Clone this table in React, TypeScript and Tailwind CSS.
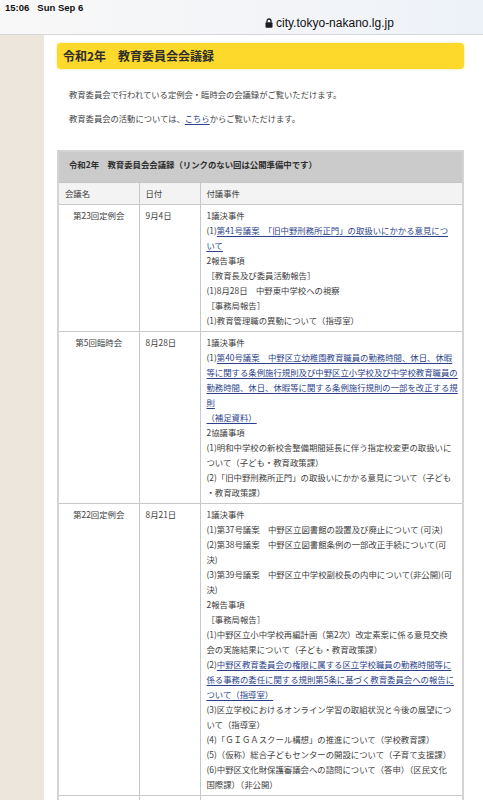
import { Fragment } from "react";

type Seg = { t: string; link?: boolean };
type Line = Seg[];

interface Meeting {
  name: string;
  date: string;
  lines: Line[];
}

const p = (t: string): Line => [{ t }];
const l = (t: string): Line => [{ t, link: true }];
const pl = (a: string, b: string): Line => [{ t: a }, { t: b, link: true }];

const meetings: Meeting[] = [
  {
    name: "第23回定例会",
    date: "9月4日",
    lines: [
      p("1議決事件"),
      pl("(1)", "第41号議案　「旧中野刑務所正門」の取扱いにかかる意見につ"),
      l("いて"),
      p("2報告事項"),
      p("［教育長及び委員活動報告］"),
      p("(1)8月28日　中野東中学校への視察"),
      p("［事務局報告］"),
      p("(1)教育管理職の異動について（指導室）"),
    ],
  },
  {
    name: "第5回臨時会",
    date: "8月28日",
    lines: [
      p("1議決事件"),
      pl("(1)", "第40号議案　中野区立幼稚園教育職員の勤務時間、休日、休暇"),
      l("等に関する条例施行規則及び中野区立小学校及び中学校教育職員の"),
      l("勤務時間、休日、休暇等に関する条例施行規則の一部を改正する規"),
      l("則"),
      l("（補足資料）"),
      p("2協議事項"),
      p("(1)明和中学校の新校舎整備期間延長に伴う指定校変更の取扱いに"),
      p("ついて（子ども・教育政策課）"),
      p("(2)「旧中野刑務所正門」の取扱いにかかる意見について（子ども"),
      p("・教育政策課）"),
    ],
  },
  {
    name: "第22回定例会",
    date: "8月21日",
    lines: [
      p("1議決事件"),
      p("(1)第37号議案　中野区立図書館の設置及び廃止について (可決)"),
      p("(2)第38号議案　中野区立図書館条例の一部改正手続について(可"),
      p("決)"),
      p("(3)第39号議案　中野区立中学校副校長の内申について(非公開)(可"),
      p("決)"),
      p("2報告事項"),
      p("［事務局報告］"),
      p("(1)中野区立小中学校再編計画（第2次）改定素案に係る意見交換"),
      p("会の実施結果について（子ども・教育政策課）"),
      pl("(2)", "中野区教育委員会の権限に属する区立学校職員の勤務時間等に"),
      l("係る事務の委任に関する規則第5条に基づく教育委員会への報告に"),
      l("ついて（指導室）"),
      p("(3)区立学校におけるオンライン学習の取組状況と今後の展望につ"),
      p("いて（指導室）"),
      p("(4)「ＧＩＧＡスクール構想」の推進について（学校教育課）"),
      p("(5)（仮称）総合子どもセンターの開設について（子育て支援課）"),
      p("(6)中野区文化財保護審議会への諮問について（答申）（区民文化"),
      p("国際課）（非公開）"),
    ],
  },
  {
    name: "\u00a0",
    date: "\u00a0",
    lines: [p("\u00a0"), p("\u00a0")],
  },
];

const LockIcon = () => (
  <svg width="8" height="10" viewBox="0 0 8 10" className="shrink-0">
    <path d="M2 4.5V3a2 2 0 0 1 4 0v1.5" fill="none" stroke="#1c1c1e" strokeWidth="1.3" />
    <rect x="0.5" y="4.3" width="7" height="5.4" rx="1" fill="#1c1c1e" />
  </svg>
);

export default function App() {
  return (
    <div className="h-screen overflow-hidden bg-white flex flex-col">
      {/* browser chrome */}
      <header className="h-[35px] shrink-0 border-b border-[#d6d6d8] bg-linear-to-r from-[#f8f8f8] via-[#f4f5f8] to-[#edf2f8] font-['Liberation_Sans',Arial,sans-serif] text-[#111]">
        <div className="h-[12px] mt-[2px] px-[5px] flex items-center gap-[8px] text-[9.5px] font-semibold">
          <span>15:06</span>
          <span>Sun Sep 6</span>
        </div>
        <div className="h-[14px] mt-[2px] pl-[265px] flex items-center gap-[3px] text-[12px]">
          <LockIcon />
          <span>city.tokyo-nakano.lg.jp</span>
        </div>
      </header>

      <div className="flex flex-1 font-['Noto_Sans_CJK_JP','Noto_Sans_CJK_SC',sans-serif]">
        <aside className="w-[44px] shrink-0 bg-[#ede6dc]" />

        <main className="flex-1 pl-[13px] pr-[19px] pt-[8px]">
          <h1 className="h-[26px] rounded-[4px] bg-[#fdd92b] px-[6px] flex items-center text-[12px] font-bold text-[#2e2e2e] shadow-[0_0_2px_rgba(250,205,30,0.7)]">
            令和2年　教育委員会会議録
          </h1>

          <p className="mt-[18px] pl-[12px] text-[8.3px] leading-[15px] text-[#444]">
            教育委員会で行われている定例会・臨時会の会議録がご覧いただけます。
          </p>
          <p className="mt-[9px] pl-[12px] text-[8.3px] leading-[15px] text-[#444]">
            教育委員会の活動については、
            <a className="text-[#2c3f8c] underline underline-offset-[2px]">こちら</a>
            からご覧いただけます。
          </p>

          <table className="mt-[24px] w-[407px] table-fixed border-collapse border-2 border-[#d4d4d4] text-[8.4px] leading-[15px] text-[#404040]">
            <colgroup>
              <col className="w-[81px]" />
              <col className="w-[61px]" />
              <col />
            </colgroup>
            <thead>
              <tr>
                <th
                  colSpan={3}
                  className="h-[30px] bg-[#cbcbcb] px-[10px] pt-[5px] pb-[10px] text-left font-bold text-[#2e2e2e] border border-[#c4c4c4]"
                >
                  令和2年　教育委員会会議録（リンクのない回は公開準備中です）
                </th>
              </tr>
              <tr className="bg-[#f3f3f3]">
                <th className="border border-[#c8c8c8] px-[6px] py-[3px] text-left font-normal">会議名</th>
                <th className="border border-[#c8c8c8] px-[6px] py-[3px] text-left font-normal">日付</th>
                <th className="border border-[#c8c8c8] px-[6px] py-[3px] text-left font-normal">付議事件</th>
              </tr>
            </thead>
            <tbody>
              {meetings.map((m, i) => (
                <tr key={i} className="align-top">
                  <td className="border border-[#c8c8c8] px-[4px] py-[3px] text-center">{m.name}</td>
                  <td className="border border-[#c8c8c8] px-[6px] py-[3px]">{m.date}</td>
                  <td className="border border-[#c8c8c8] px-[6px] py-[3px]">
                    {m.lines.map((line, j) => (
                      <div key={j} className="whitespace-nowrap">
                        {line.map((s, k) => (
                          <Fragment key={k}>
                            {s.link ? (
                              <a className="text-[#2c3f8c] underline underline-offset-[2px]">{s.t}</a>
                            ) : (
                              s.t
                            )}
                          </Fragment>
                        ))}
                      </div>
                    ))}
                  </td>
                </tr>
              ))}
            </tbody>
          </table>
        </main>
      </div>
    </div>
  );
}
